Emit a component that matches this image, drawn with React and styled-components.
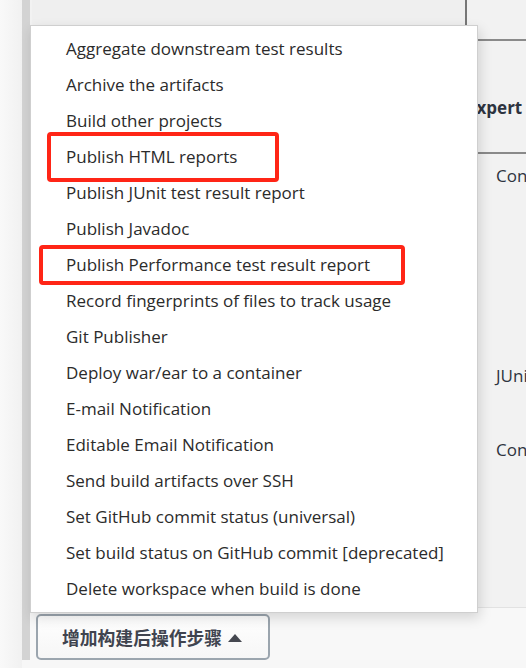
import React from "react";
import styled, { createGlobalStyle } from "styled-components";

const GlobalStyle = createGlobalStyle`
  html, body {
    margin: 0;
    padding: 0;
    background: #f7f7f7;
    overflow: hidden;
  }
  body {
    font-family: "Open Sans", "Noto Sans", "Noto Sans CJK SC", sans-serif;
    color: #333;
  }
`;

// layout
const Page = styled.div`
  position: relative;
  width: 526px;
  height: 668px;
  overflow: hidden;
  padding-left: 22px;
  box-sizing: border-box;
  background: linear-gradient(90deg, #f9f9f9 0px, #f1f1f1 22px, #f7f7f7 22px);
`;

const Section = styled.div`
  display: flex;
  flex-direction: column;
  border-left: 8px solid #d3d3d3;
  height: 660px;
  box-sizing: border-box;
`;

const Upper = styled.div`
  display: grid;
  grid-template-columns: 440px 1fr;
  height: 608px;
  background: #f2f2f2;
  border-bottom: 1px solid #e2e2e2;
  box-sizing: border-box;
`;

const LeftCol = styled.div`
  padding-left: 2px;
`;

const TopBox = styled.div`
  height: 25px;
  background: #efefef;
  border-right: 2px solid #777;
  margin-right: 3px;
`;

const RightCol = styled.div`
  display: flex;
  flex-direction: column;
  white-space: nowrap;
  overflow: hidden;
`;

const Cell = styled.div`
  height: ${(p) => p.h}px;
  border-bottom: ${(p) => (p.line ? "2px solid #8a8a8a" : "none")};
  padding-top: ${(p) => p.top || 0}px;
  padding-left: ${(p) => p.pad || 0}px;
  text-indent: ${(p) => p.indent || 0}px;
  line-height: 22px;
  font-weight: ${(p) => (p.bold ? 700 : 400)};
  font-size: 17px;
  color: #2e3440;
  flex-shrink: 0;
  box-sizing: border-box;
`;

const Bottom = styled.div`
  flex: 1;
  display: flex;
  align-items: flex-end;
  padding-left: 6px;
  background: #f8f8f8;
`;

const AddButton = styled.button`
  display: flex;
  align-items: center;
  gap: 6px;
  height: 46px;
  width: 234px;
  padding: 0 0 0 24px;
  border: 2px solid #9ba5ae;
  border-radius: 5px;
  background: linear-gradient(#ffffff, #f6f6f6);
  font-family: "Noto Sans CJK SC", "Noto Sans", sans-serif;
  font-weight: 700;
  font-size: 17.8px;
  color: #40444f;
  box-sizing: border-box;
  cursor: pointer;
`;

const Caret = styled.svg`
  width: 14px;
  height: 8px;
  margin-top: 1px;
`;

// dropdown
const Menu = styled.ul`
  position: absolute;
  left: 30px;
  top: 25px;
  width: 448px;
  margin: 0;
  padding: 5px 0;
  list-style: none;
  background: #fff;
  border: 1px solid #cfcfcf;
  box-sizing: border-box;
  box-shadow: 2px 5px 12px rgba(0, 0, 0, 0.14);
  z-index: 2;
`;

const Item = styled.li`
  height: 36px;
  line-height: 36px;
  padding-left: 35px;
  font-size: 17px;
  color: #2b2b2b;
  white-space: nowrap;
`;

const Mark = styled.div`
  position: absolute;
  left: ${(p) => p.x}px;
  top: ${(p) => p.y}px;
  width: ${(p) => p.w}px;
  height: ${(p) => p.h}px;
  border: 4px solid #ff2516;
  border-radius: 4px;
  box-sizing: border-box;
  z-index: 3;
`;

const items = [
  "Aggregate downstream test results",
  "Archive the artifacts",
  "Build other projects",
  "Publish HTML reports",
  "Publish JUnit test result report",
  "Publish Javadoc",
  "Publish Performance test result report",
  "Record fingerprints of files to track usage",
  "Git Publisher",
  "Deploy war/ear to a container",
  "E-mail Notification",
  "Editable Email Notification",
  "Send build artifacts over SSH",
  "Set GitHub commit status (universal)",
  "Set build status on GitHub commit [deprecated]",
  "Delete workspace when build is done",
];

const App = () => {
  return (
    <>
      <GlobalStyle />
      <Page>
        <Section>
          <Upper>
            <LeftCol>
              <TopBox />
            </LeftCol>
            <RightCol>
              <Cell h={41} line />
              <Cell h={113} line bold top={56} indent={-3}>Expert</Cell>
              <Cell h={200} top={11} pad={26}>Configure</Cell>
              <Cell h={74} top={11} pad={26}>JUnit</Cell>
              <Cell h={46} top={11} pad={26}>Configure</Cell>
            </RightCol>
          </Upper>
          <Bottom>
            <AddButton>
              增加构建后操作步骤
              <Caret viewBox="0 0 14 8">
                <path d="M7 0 L14 8 L0 8 Z" fill="#454850" />
              </Caret>
            </AddButton>
          </Bottom>
        </Section>

        <Menu>
          {items.map((label) => (
            <Item key={label}>{label}</Item>
          ))}
        </Menu>

        <Mark x={47} y={132} w={232} h={50} />
        <Mark x={39} y={245} w={366} h={40} />
      </Page>
    </>
  );
};

export default App;
